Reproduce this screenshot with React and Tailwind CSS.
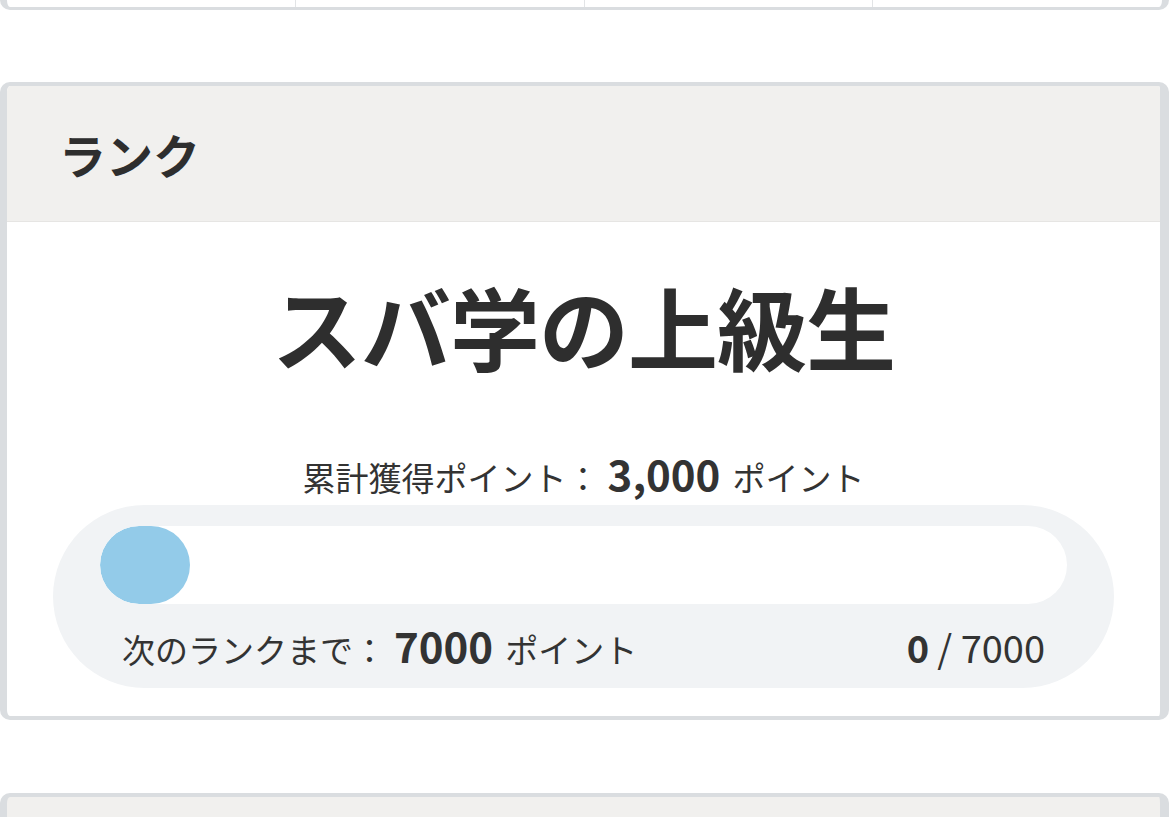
const jp = "font-['Noto_Sans_CJK_JP',sans-serif]"

function StatsStrip() {
  return (
    <div className="h-[10px] grid grid-cols-4 border-x-[7px] border-b-[3px] border-[#dadde0] rounded-b-[10px] bg-white">
      <div className="border-r border-[#e2e4e6]" />
      <div className="border-r border-[#e2e4e6]" />
      <div className="border-r border-[#e2e4e6]" />
      <div />
    </div>
  )
}

function RankCard() {
  const total = 7000
  const current = 0
  return (
    <div className="border-l-[7px] border-r-[9px] border-y-[4px] border-[#dadde0] rounded-[10px] bg-white overflow-hidden">
      <div className="h-[136px] bg-[#f1f0ee] border-b border-[#e6e5e3] flex items-center px-[52px]">
        <h2 className="text-[47px] font-bold text-[#2e2e2e] leading-none">ランク</h2>
      </div>
      <div className="flex flex-col items-center pt-[58px] pb-[28px] px-[46px]">
        <div className="text-[90px] font-bold text-[#2e2e2e] leading-none tracking-[-1px]">スバ学の上級生</div>
        <div className="mt-[82px] flex items-baseline text-[33px] text-[#333] leading-none">
          <span>累計獲得ポイント：</span>
          <span className="ml-[8px] text-[42px] font-bold">3,000</span>
          <span className="ml-[12px]">ポイント</span>
        </div>
        <div className="mt-[11px] w-full bg-[#f1f3f5] rounded-full px-[47px] pt-[21px] pb-[22px]">
          <div className="h-[78px] bg-white rounded-full overflow-hidden">
            <div className="h-full w-[90px] bg-[#93cbe9] rounded-full" />
          </div>
          <div className="mt-[20px] px-[22px] flex items-baseline justify-between text-[33px] text-[#333] leading-none">
            <div className="flex items-baseline">
              <span>次のランクまで：</span>
              <span className="ml-[8px] text-[42px] font-bold">{total - current}</span>
              <span className="ml-[12px]">ポイント</span>
            </div>
            <div className="flex items-baseline">
              <span className="text-[38px] font-bold">{current}</span>
              <span className="ml-[8px] text-[38px]">/ {total}</span>
            </div>
          </div>
        </div>
      </div>
    </div>
  )
}

export default function App() {
  return (
    <div className={`${jp} bg-white min-h-[817px] w-[1169px] overflow-hidden`}>
      <StatsStrip />
      <div className="mt-[72px]">
        <RankCard />
      </div>
      <div className="mt-[73px] h-[60px] border-l-[7px] border-r-[9px] border-t-[4px] border-[#dadde0] rounded-t-[10px] bg-[#f1f0ee]" />
    </div>
  )
}
